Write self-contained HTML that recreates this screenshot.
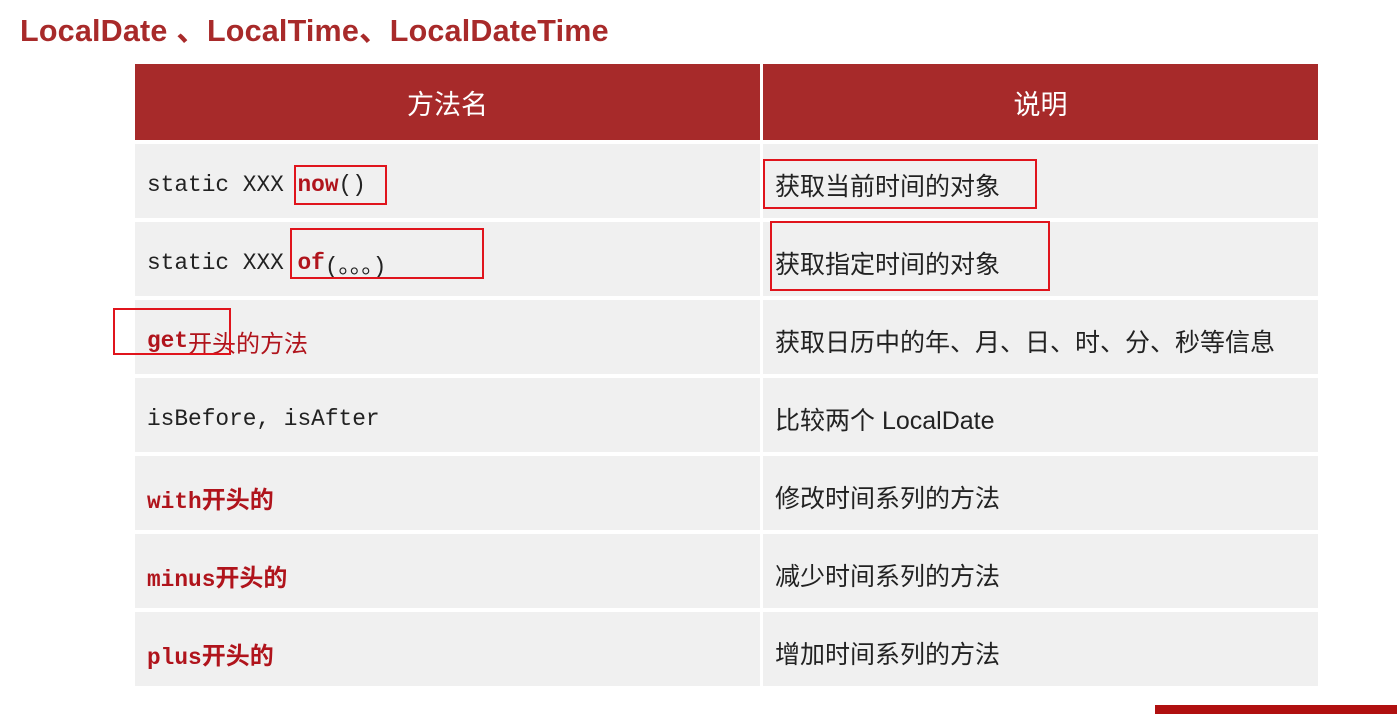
<!DOCTYPE html>
<html><head><meta charset="utf-8"><style>
body{margin:0;width:1397px;height:714px;background:#fff;position:relative;overflow:hidden;font-family:"Liberation Sans","Noto Sans CJK SC",sans-serif}
.t{position:absolute;left:20px;top:6px;font-size:30.5px;font-weight:bold;color:#a82a2a;letter-spacing:0.2px;white-space:pre}
.h{position:absolute;top:64px;height:76px;background:#a72a2a;color:#fff;font-size:27px;display:flex;align-items:center;justify-content:center}
.r{position:absolute;height:74px;background:#f0f0f0;display:flex;align-items:center;font-size:25px;color:#222;white-space:pre;box-sizing:border-box;padding-top:8px}
.m{font-family:"Liberation Mono","Noto Sans CJK SC",monospace;font-size:22.8px;padding-left:12px}
.m .z{font-family:"Liberation Sans","Noto Sans CJK SC",sans-serif;font-size:24px}
.c2{padding-left:12px}
.k{color:#b0141c;font-weight:bold}
.b{position:absolute;border:2px solid #e0141c}
</style></head><body>
<div class="t">LocalDate 、LocalTime、LocalDateTime</div>
<div class="h" style="left:135px;width:625px">方法名</div>
<div class="h" style="left:763px;width:555px">说明</div>

<div class="r m" style="left:135px;width:625px;top:144px">static XXX <span class="k">now</span>()</div>
<div class="r c2" style="left:763px;width:555px;top:144px">获取当前时间的对象</div>
<div class="r m" style="left:135px;width:625px;top:222px">static XXX <span class="k">of</span>(。。。)</div>
<div class="r c2" style="left:763px;width:555px;top:222px">获取指定时间的对象</div>
<div class="r m" style="left:135px;width:625px;top:300px"><span class="k">get</span><span class="z" style="color:#b0141c">开头的方法</span></div>
<div class="r c2" style="left:763px;width:555px;top:300px">获取日历中的年、月、日、时、分、秒等信息</div>
<div class="r m" style="left:135px;width:625px;top:378px">isBefore, isAfter</div>
<div class="r c2" style="left:763px;width:555px;top:378px">比较两个 LocalDate</div>
<div class="r m" style="left:135px;width:625px;top:456px"><span class="k">with<span class="z">开头的</span></span></div>
<div class="r c2" style="left:763px;width:555px;top:456px">修改时间系列的方法</div>
<div class="r m" style="left:135px;width:625px;top:534px"><span class="k">minus<span class="z">开头的</span></span></div>
<div class="r c2" style="left:763px;width:555px;top:534px">减少时间系列的方法</div>
<div class="r m" style="left:135px;width:625px;top:612px"><span class="k">plus<span class="z">开头的</span></span></div>
<div class="r c2" style="left:763px;width:555px;top:612px">增加时间系列的方法</div>

<div class="b" style="left:294px;top:165px;width:89px;height:36px"></div>
<div class="b" style="left:290px;top:228px;width:190px;height:47px"></div>
<div class="b" style="left:763px;top:159px;width:270px;height:46px"></div>
<div class="b" style="left:770px;top:221px;width:276px;height:66px"></div>
<div class="b" style="left:113px;top:308px;width:114px;height:43px"></div>
<div style="position:absolute;left:1155px;top:705px;width:242px;height:9px;background:#b01010"></div>
</body></html>
